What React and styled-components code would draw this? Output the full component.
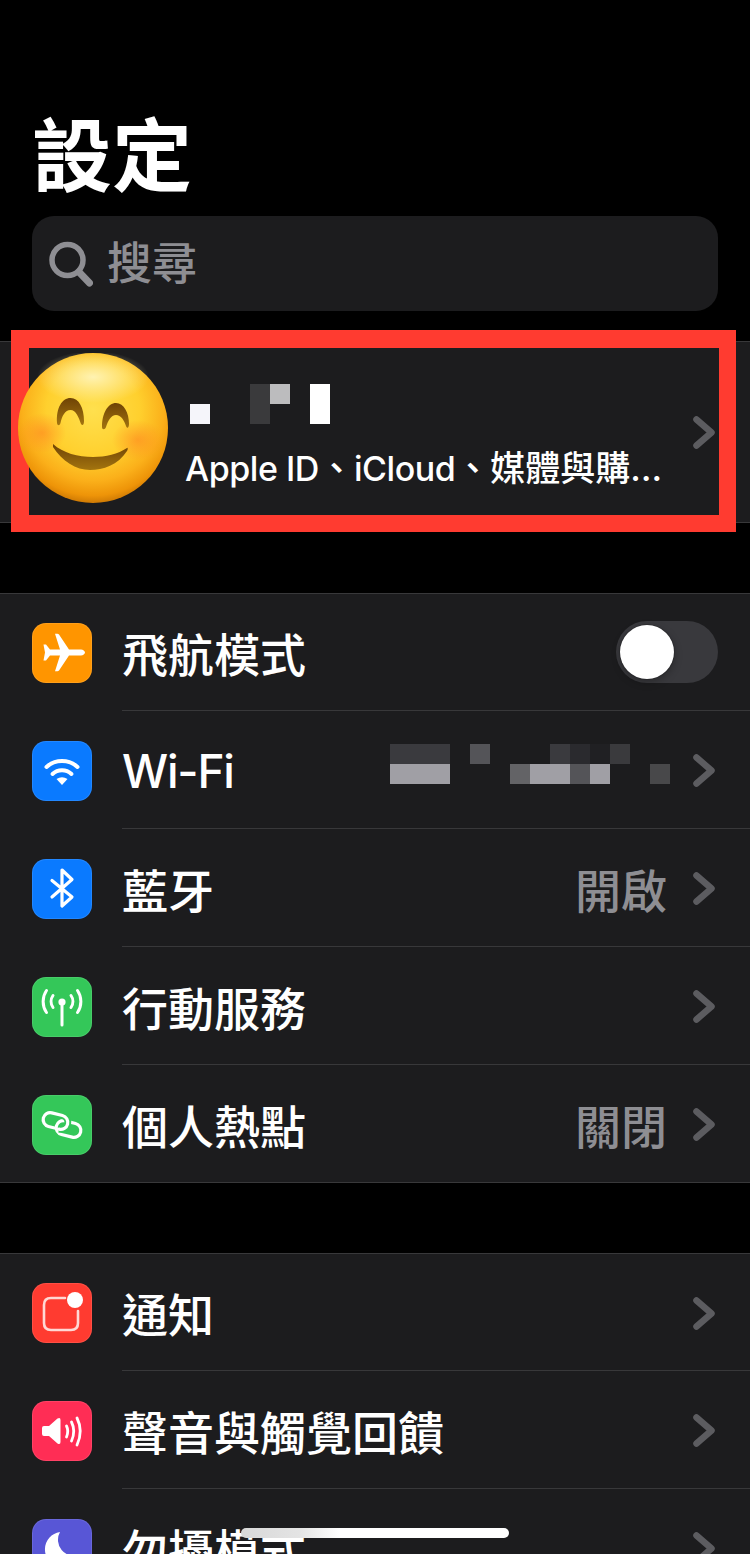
import React from 'react'
import styled, { createGlobalStyle } from 'styled-components'

const GlobalStyle = createGlobalStyle`
  html, body {
    margin: 0;
    background: #000;
  }
  * {
    box-sizing: border-box;
  }
`

const Page = styled.main`
  position: relative;
  width: 750px;
  height: 1554px;
  overflow: hidden;
  background: #000;
  color: #fff;
  font-family: Inter, "Noto Sans CJK TC", sans-serif;
  padding-top: 109px;
`

const Title = styled.h1`
  margin: 0 0 13px 32px;
  font-size: 80px;
  line-height: 94px;
  font-weight: 700;
`

const SearchBar = styled.div`
  display: flex;
  align-items: center;
  gap: 14px;
  height: 95px;
  margin: 0 32px 30px;
  padding: 0 0 0 17px;
  border-radius: 22px;
  background: #1c1c1e;
  color: #8e8e93;
  font-size: 45px;
  line-height: 90px;
  font-weight: 500;
`

const Profile = styled.section`
  position: relative;
  display: flex;
  height: 182px;
  padding-left: 18px;
  background: #1c1c1e;
  border-top: 1px solid #38383a;
  border-bottom: 1px solid #38383a;
`

const Avatar = styled.svg`
  position: relative;
  z-index: 2;
  flex: none;
  width: 150px;
  height: 150px;
  margin-top: 11px;
`

const ProfileText = styled.div`
  display: flex;
  flex-direction: column;
  flex: 1;
  margin-left: 17px;
  padding-top: 42px;
`

const Subtitle = styled.div`
  margin-top: 22px;
  font-size: 35px;
  line-height: 44px;
  font-weight: 500;
  white-space: nowrap;
`

const Latin = styled.span`
  font-size: 34px;
  letter-spacing: -0.45px;
`

const ProfileChevron = styled.div`
  display: flex;
  align-items: center;
  padding-right: 35px;
`

const Highlight = styled.div`
  position: absolute;
  top: -12px;
  left: 11px;
  z-index: 1;
  width: 725px;
  height: 202px;
  border: 18px solid #ff3b30;
  border-right-width: 17px;
  border-bottom-width: 17px;
  pointer-events: none;
`

const Mosaic = styled.div`
  display: grid;
  grid-template-columns: repeat(${({ $cols }) => $cols}, 20px);
  grid-template-rows: repeat(2, 20px);
  margin-left: ${({ $inset }) => $inset || 0}px;
`

const MosaicCell = styled.span`
  grid-column: ${({ $col }) => $col + 1};
  grid-row: ${({ $row }) => $row + 1};
  background: ${({ $color }) => $color};
`

const Group = styled.section`
  margin-top: 70px;
  background: #1c1c1e;
  border-top: 1px solid #38383a;
  border-bottom: 1px solid #38383a;
`

const Row = styled.div`
  display: flex;
  align-items: center;
  height: 118px;
  padding-left: 32px;

  &:first-child,
  &:last-child {
    height: 117px;
  }
`

const IconTile = styled.div`
  flex: none;
  width: 60px;
  height: 60px;
  margin-top: 2px;
  border-radius: 14px;
  background: ${({ $bg }) => $bg};
  box-shadow: inset 0 0 0 1px rgba(255, 255, 255, 0.1);

  ${Row}:first-child & {
    margin-top: 1px;
  }

  svg {
    display: block;
    width: 60px;
    height: 60px;
  }
`

const RowBody = styled.div`
  display: flex;
  flex: 1;
  align-items: center;
  align-self: stretch;
  margin-left: 30px;
  padding-right: 35px;
  border-bottom: 1px solid #38383a;

  ${Row}:last-child & {
    border-bottom: 0;
  }
`

const Label = styled.span`
  flex: 1;
  font-size: 46px;
  font-weight: 500;
  white-space: nowrap;
  letter-spacing: ${({ $latin }) => ($latin ? '-1.2px' : '0')};
  padding-top: ${({ $latin }) => ($latin ? '3px' : '0')};
`

const Value = styled.span`
  margin-right: 26px;
  color: #8e8e93;
  font-size: 46px;
  font-weight: 500;
`

const RowMosaic = styled.div`
  margin-right: 3px;
  margin-bottom: 12px;
`

const RowChevron = styled.div`
  display: flex;
  margin-top: 2px;
`

const Toggle = styled.div`
  display: flex;
  align-items: center;
  width: 102px;
  height: 62px;
  margin-right: -3px;
  padding-left: 4px;
  border-radius: 31px;
  background: #39393d;
`

const ToggleKnob = styled.div`
  width: 54px;
  height: 54px;
  border-radius: 50%;
  background: #fff;
  box-shadow: 0 0 0 1px rgba(0, 0, 0, 0.12), 0 3px 8px rgba(0, 0, 0, 0.3);
`

const HomeBar = styled.div`
  position: absolute;
  left: 241px;
  bottom: 16px;
  width: 268px;
  height: 10px;
  border-radius: 5px;
  background: linear-gradient(90deg, #d8d8d8 0%, #e4e4e4 22%, #fff 37%);
`

function Chevron() {
  return (
    <svg width="22" height="33" viewBox="0 0 22 33" fill="none">
      <path d="M3.5 3.5 18.5 16.5 3.5 29.500" stroke="#5c5c60" strokeWidth="6.5" strokeLinecap="round" strokeLinejoin="round" />
    </svg>
  )
}

function SearchIcon() {
  return (
    <svg width="44" height="46" viewBox="0 0 44 46" fill="none" stroke="#8e8e93" strokeLinecap="round">
      <circle cx="18.5" cy="19" r="15.5" strokeWidth="5.5" />
      <path d="M30 31 40.5 42" strokeWidth="7" />
    </svg>
  )
}

function Smiley() {
  return (
    <Avatar viewBox="0 0 150 150">
      <defs>
        <radialGradient id="face" cx="50%" cy="38%" r="62%">
          <stop offset="0%" stopColor="#ffe04e" />
          <stop offset="50%" stopColor="#ffd02e" />
          <stop offset="76%" stopColor="#fbb01a" />
          <stop offset="92%" stopColor="#ee9408" />
          <stop offset="100%" stopColor="#cf7a04" />
        </radialGradient>
        <radialGradient id="gloss" cx="50%" cy="50%" r="50%">
          <stop offset="0%" stopColor="#fff4b8" stopOpacity="0.95" />
          <stop offset="100%" stopColor="#fff4b8" stopOpacity="0" />
        </radialGradient>
        <radialGradient id="blush">
          <stop offset="0%" stopColor="#ff8f22" stopOpacity="0.7" />
          <stop offset="100%" stopColor="#ff8f22" stopOpacity="0" />
        </radialGradient>
        <linearGradient id="feature" x1="0" y1="0" x2="0" y2="1">
          <stop offset="0%" stopColor="#6f4305" />
          <stop offset="100%" stopColor="#a3740f" />
        </linearGradient>
      </defs>
      <circle cx="75" cy="75" r="75" fill="url(#face)" />
      <ellipse cx="75" cy="24" rx="56" ry="26" fill="url(#gloss)" />
      <ellipse cx="24" cy="80" rx="24" ry="20" fill="url(#blush)" />
      <ellipse cx="120" cy="87" rx="26" ry="20" fill="url(#blush)" />
      <path fill="url(#feature)" d="M39 70C38 55 44 45 52.500 45C61 45 66 55 66 68C66 72 64.500 73 63 71C61 65 58 57 52.500 57C47 57 44 63 42.500 70C41.500 73 39.500 73 39 70Z" />
      <path fill="url(#feature)" d="M84 74C84 60 90 50 98 50C106 50 111 60 111 71C111 75 109 76 108 73C106 67 103 62 98 62C93 62 90 68 88 74C87 77 84 77 84 74Z" />
      <path fill="url(#feature)" d="M35 91C45 100 60 104 75 104C88 104 100 101 109 95C110 94 110 97 109 98C100 112 85 117 72 117C58 117 44 108 35 94Z" />
    </Avatar>
  )
}

const icons = {
  airplane: (
    <svg viewBox="0 0 60 60" fill="#fff">
      <path d="M49 26.500C51 26.500 53 28 53 29.500C53 31 51 32.500 49 32.500L37 32.500L27 47.500C26.600 48 26 48.300 25.400 48.300L23 48.300L28 32.500L18 32.500L14 37.500L11.500 37.500L13 29.500L11.500 21.500L14 21.500L18 26.500L28 26.500L23 10.700L25.400 10.700C26 10.700 26.600 11 27 11.500L37 26.500Z" />
    </svg>
  ),
  wifi: (
    <svg viewBox="0 0 60 60" fill="none" stroke="#fff" strokeWidth="4" strokeLinecap="round">
      <path d="M14.500 26A23 23 0 0 1 45.500 26" />
      <path d="M20.500 33A14 14 0 0 1 39.500 33" />
      <path d="M30 44 24.500 38Q30 34.500 35.500 38Z" fill="#fff" stroke="none" />
    </svg>
  ),
  bluetooth: (
    <svg viewBox="0 0 60 60" fill="none" stroke="#fff" strokeWidth="3.200" strokeLinecap="round" strokeLinejoin="round">
      <path d="M20 21.500 40 38 30 47V11L40 20.500 20 38" />
    </svg>
  ),
  antenna: (
    <svg viewBox="0 0 60 60" fill="none" stroke="#fff" strokeWidth="3" strokeLinecap="round">
      <circle cx="30" cy="25" r="3.600" fill="#fff" stroke="none" />
      <path d="M30 27V48" />
      <path d="M14.500 13.500C10 20 10 29 14.500 35.500" />
      <path d="M21 18.500C18.500 22 18.500 27 21 30.500" />
      <path d="M45.500 13.500C50 20 50 29 45.500 35.500" />
      <path d="M39 18.500C41.500 22 41.500 27 39 30.500" />
    </svg>
  ),
  hotspot: (
    <svg viewBox="0 0 60 60" fill="none" stroke="#fff" strokeWidth="3.200" strokeLinecap="round">
      <g transform="rotate(14 30 30)">
        <rect x="24.800" y="25.300" width="25" height="14" rx="7" />
        <path d="M28.200 20.700A7 7 0 0 1 28.200 34.700" stroke="#34c759" strokeWidth="7" strokeLinecap="butt" />
        <path d="M23.500 34.700H17.200A7 7 0 0 1 17.200 20.700H28.200A7 7 0 0 1 28.200 34.700" />
      </g>
    </svg>
  ),
  bell: (
    <svg viewBox="0 0 60 60" fill="none">
      <path d="M33 15H19Q12 15 12 22V40Q12 47 19 47H39Q46 47 46 40V28" stroke="#ffd8d4" strokeWidth="2.600" strokeLinecap="round" />
      <circle cx="43" cy="17" r="8" fill="#fff" />
    </svg>
  ),
  sound: (
    <svg viewBox="0 0 60 60" fill="none" stroke="#fff" strokeWidth="2.800" strokeLinecap="round">
      <path d="M10 27Q10 25 12 25H17L25.500 17.500Q28.500 16 28.500 19V41Q28.500 44 25.500 42.500L17 35H12Q10 35 10 33Z" fill="#fff" stroke="none" />
      <path d="M34.500 25Q37 30 34.500 36" />
      <path d="M39.500 21Q44 30 39.500 40" />
      <path d="M45 17Q51.500 30 45 44" />
    </svg>
  ),
  moon: (
    <svg viewBox="0 0 60 60" fill="#fff">
      <path d="M28 13A17.500 17.500 0 1 0 47 36A16 16 0 0 1 28 13Z" />
    </svg>
  ),
}

const nameCells = [
  { col: 0, row: 1, color: '#f5f5fa' },
  { col: 3, row: 0, color: '#3a3a3c' },
  { col: 3, row: 1, color: '#3a3a3c' },
  { col: 4, row: 0, color: '#bcbcbe' },
  { col: 6, row: 0, color: '#fff' },
  { col: 6, row: 1, color: '#fff' },
]

const wifiCells = [
  { col: 0, row: 0, color: '#3a3a3e' },
  { col: 1, row: 0, color: '#3a3a3e' },
  { col: 2, row: 0, color: '#3a3a3e' },
  { col: 0, row: 1, color: '#a09fa5' },
  { col: 1, row: 1, color: '#a09fa5' },
  { col: 2, row: 1, color: '#a09fa5' },
  { col: 4, row: 0, color: '#545458' },
  { col: 8, row: 0, color: '#3a3a3e' },
  { col: 9, row: 0, color: '#2a2a2e' },
  { col: 10, row: 0, color: '#202023' },
  { col: 11, row: 0, color: '#3a3a3d' },
  { col: 6, row: 1, color: '#636366' },
  { col: 7, row: 1, color: '#a09fa5' },
  { col: 8, row: 1, color: '#a09fa5' },
  { col: 9, row: 1, color: '#545458' },
  { col: 10, row: 1, color: '#a09fa5' },
  { col: 13, row: 1, color: '#48484a' },
]

const firstGroup = [
  { label: '飛航模式', icon: 'airplane', bg: '#ff9500', toggle: true },
  { label: 'Wi-Fi', icon: 'wifi', bg: '#0a7aff', mosaic: wifiCells, latin: true },
  { label: '藍牙', icon: 'bluetooth', bg: '#0a7aff', value: '開啟' },
  { label: '行動服務', icon: 'antenna', bg: '#34c759' },
  { label: '個人熱點', icon: 'hotspot', bg: '#34c759', value: '關閉' },
]

const secondGroup = [
  { label: '通知', icon: 'bell', bg: '#ff3b30' },
  { label: '聲音與觸覺回饋', icon: 'sound', bg: '#ff2d55' },
  { label: '勿擾模式', icon: 'moon', bg: '#5856d6' },
]

function renderCells(cells) {
  return cells.map((c) => (
    <MosaicCell key={`${c.col}-${c.row}`} $col={c.col} $row={c.row} $color={c.color} />
  ))
}

function SettingRow({ item }) {
  return (
    <Row>
      <IconTile $bg={item.bg}>{icons[item.icon]}</IconTile>
      <RowBody>
        <Label $latin={item.latin}>{item.label}</Label>
        {item.value && <Value>{item.value}</Value>}
        {item.mosaic && (
          <RowMosaic>
            <Mosaic $cols={15}>{renderCells(item.mosaic)}</Mosaic>
          </RowMosaic>
        )}
        {item.toggle ? (
          <Toggle>
            <ToggleKnob />
          </Toggle>
        ) : (
          <RowChevron>
            <Chevron />
          </RowChevron>
        )}
      </RowBody>
    </Row>
  )
}

export default function App() {
  return (
    <Page>
      <GlobalStyle />
      <Title>設定</Title>
      <SearchBar>
        <SearchIcon />
        <span>搜尋</span>
      </SearchBar>

      <Profile>
        <Smiley />
        <ProfileText>
          <Mosaic $cols={7} $inset={5}>{renderCells(nameCells)}</Mosaic>
          <Subtitle>
            <Latin>Apple ID</Latin>、<Latin>iCloud</Latin>、媒體與購…
          </Subtitle>
        </ProfileText>
        <ProfileChevron>
          <Chevron />
        </ProfileChevron>
        <Highlight />
      </Profile>

      <Group>
        {firstGroup.map((item) => (
          <SettingRow key={item.label} item={item} />
        ))}
      </Group>

      <Group>
        {secondGroup.map((item) => (
          <SettingRow key={item.label} item={item} />
        ))}
      </Group>

      <HomeBar />
    </Page>
  )
}
